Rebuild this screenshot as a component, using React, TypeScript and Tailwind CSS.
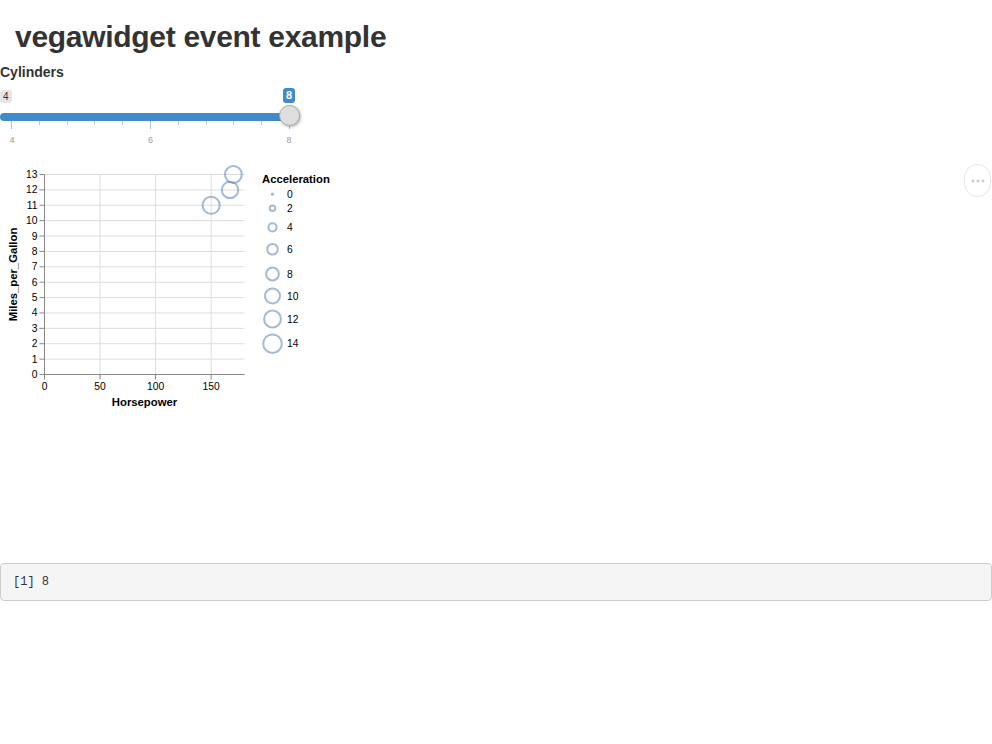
import React from "react";

const FONT = '"Liberation Sans", Arial, Helvetica, sans-serif';

function Slider() {
  const ticks = Array.from({ length: 11 }, (_, i) => i);
  return (
    <div className="flex w-[300px] flex-col">
      <div className="flex h-[17px] items-start justify-between pr-[5px]">
        <div className="mt-[2px] h-[13px] rounded-[3px] bg-[#e6e6e6] px-[3px] text-[10px] leading-[13px] text-[#333]">
          4
        </div>
        <div className="h-[15px] w-[12px] rounded-[3px] bg-[#428bca] text-center text-[11px] font-bold leading-[15px] text-white">
          8
        </div>
      </div>
      <div className="relative mt-[8px] h-[8px] w-[290px]">
        <div className="h-full w-full rounded-full bg-[#428bca]" />
        <div className="absolute left-[279px] top-[-8px] h-[21px] w-[21px] rounded-full border border-[#aaa] bg-[#dedede] shadow-[1px_1px_3px_rgba(0,0,0,0.3)]" />
      </div>
      <div className="flex h-[8px] w-[290px] items-start justify-between pl-[11px]">
        {ticks.map((i) => (
          <div key={i} className={i % 5 === 0 ? "h-[8px] w-px bg-[#a9c1dc]" : "h-[4px] w-px bg-[#c5c9d0]"} />
        ))}
      </div>
      <div className="mt-[5px] flex w-[300px] justify-between pl-[2px] pr-[1px] text-[9px] leading-[12px] text-[#999]">
        <span className="w-[20px] text-center">4</span>
        <span className="w-[20px] text-center">6</span>
        <span className="w-[20px] text-center">8</span>
      </div>
    </div>
  );
}

function Chart() {
  const x0 = 44.5;
  const y0 = 374.5;
  const sx = (v: number) => x0 + (v * 200) / 180;
  const sy = (v: number) => y0 - (v * 200) / 13;
  const ys = Array.from({ length: 14 }, (_, i) => i);
  const xs = [0, 50, 100, 150];
  const legend: [string, number, number][] = [
    ["0", 194.3, 0.8],
    ["2", 208.3, 2.8],
    ["4", 227.3, 4.1],
    ["6", 249.3, 5.3],
    ["8", 274, 6.4],
    ["10", 296, 7.5],
    ["12", 319, 8.4],
    ["14", 343.7, 9.3],
  ];
  const pts: [number, number, number][] = [
    [150, 11, 8.6],
    [167, 12, 8.2],
    [170, 13, 8.4],
  ];
  const stroke = "#4c78a8";
  return (
    <svg width={340} height={250} viewBox="0 160 340 250" style={{ fontFamily: FONT }}>
      {ys.map((k) => (
        <line key={"h" + k} x1={x0} x2={x0 + 200} y1={sy(k)} y2={sy(k)} stroke="#ddd" strokeWidth={1} />
      ))}
      {xs.map((v) => (
        <line key={"v" + v} x1={sx(v)} x2={sx(v)} y1={174.5} y2={y0} stroke="#ddd" strokeWidth={1} />
      ))}
      <line x1={x0} x2={x0} y1={174.5} y2={y0} stroke="#888" />
      <line x1={x0} x2={x0 + 200} y1={y0} y2={y0} stroke="#888" />
      {ys.map((k) => (
        <g key={"yt" + k}>
          <line x1={x0 - 5} x2={x0} y1={sy(k)} y2={sy(k)} stroke="#888" />
          <text x={x0 - 7} y={sy(k) + 3.5} fontSize={10.3} textAnchor="end" fill="#000">
            {k}
          </text>
        </g>
      ))}
      {xs.map((v) => (
        <g key={"xt" + v}>
          <line x1={sx(v)} x2={sx(v)} y1={y0} y2={y0 + 5} stroke="#888" />
          <text x={sx(v)} y={390} fontSize={10.3} textAnchor="middle" fill="#000">
            {v}
          </text>
        </g>
      ))}
      <text x={144.5} y={406} fontSize={11.3} fontWeight="bold" textAnchor="middle" fill="#000">
        Horsepower
      </text>
      <text
        x={0}
        y={0}
        fontSize={11.3}
        fontWeight="bold"
        textAnchor="middle"
        fill="#000"
        transform="translate(17 274.5) rotate(-90)"
      >
        Miles_per_Gallon
      </text>
      {pts.map(([h, m, r], i) => (
        <circle key={i} cx={sx(h)} cy={sy(m)} r={r} fill="none" stroke={stroke} strokeOpacity={0.5} strokeWidth={2} />
      ))}
      <text x={262} y={183} fontSize={11.3} fontWeight="bold" fill="#000">
        Acceleration
      </text>
      {legend.map(([t, y, r]) => (
        <g key={t}>
          <circle cx={272.5} cy={y} r={r} fill="none" stroke={stroke} strokeOpacity={0.5} strokeWidth={2} />
          <text x={287} y={y + 3.5} fontSize={10.3} fill="#000">
            {t}
          </text>
        </g>
      ))}
    </svg>
  );
}

export default function App() {
  return (
    <div className="flex min-h-[744px] w-full flex-col bg-white text-[#333]" style={{ fontFamily: FONT }}>
      <h1 className="mt-[20px] pl-[15px] text-[30px] font-bold leading-[33px] tracking-[-0.3px] text-[#333]">
        vegawidget event example
      </h1>
      <div className="mt-[9px] h-[20px] text-[14px] font-bold leading-[20px] text-[#333]">Cylinders</div>
      <div className="mt-[6px]">
        <Slider />
      </div>
      <div className="mt-[14px] flex h-[403px] items-start justify-between">
        <Chart />
        <div className="mr-[1px] mt-[4px] flex h-[33px] w-[27px] items-center justify-center rounded-full border border-[#e6e6e6] bg-white">
          <svg width="14" height="4" viewBox="0 0 14 4">
            <circle cx="2" cy="2" r="1.5" fill="#ccc" />
            <circle cx="7" cy="2" r="1.5" fill="#ccc" />
            <circle cx="12" cy="2" r="1.5" fill="#ccc" />
          </svg>
        </div>
      </div>
      <div
        className="flex h-[38px] items-center rounded-[4px] border border-[#ccc] bg-[#f5f5f5] pl-[12px] text-[12px] text-[#333]"
        style={{ fontFamily: '"Liberation Mono", "DejaVu Sans Mono", monospace' }}
      >
        [1] 8
      </div>
    </div>
  );
}
